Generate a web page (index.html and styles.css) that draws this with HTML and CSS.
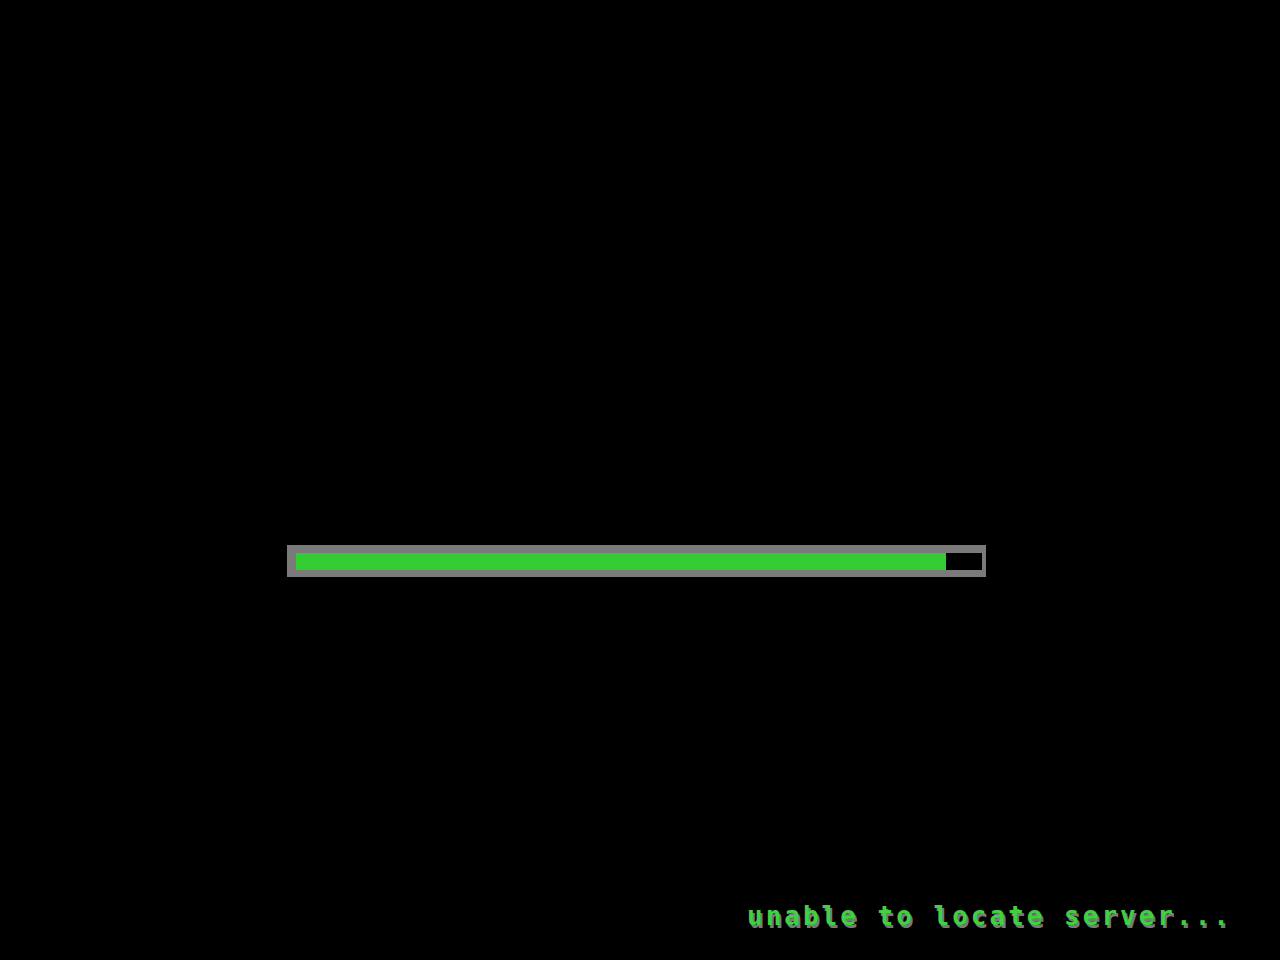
FILE: index.html
```html
<!DOCTYPE html>
<html>
<head>
<meta charset="utf-8">
<link rel="stylesheet" href="styles.css">
<title>Loading</title>
</head>
<body>
<div class="screen">
  <div class="bar-row">
    <div class="bar">
      <div class="track"><div class="fill" style="width:94.75%"></div></div>
    </div>
  </div>
  <div class="status-row">
    <span class="status">unable to locate server...</span>
  </div>
</div>
</body>
</html>
```
FILE: styles.css
```css
html, body {
  margin: 0;
  padding: 0;
  background: #000;
}
.screen {
  width: 1280px;
  height: 960px;
  display: flex;
  flex-direction: column;
  box-sizing: border-box;
}
.bar-row {
  padding-top: 545px;
  padding-left: 287px;
}
.bar {
  width: 699px;
  height: 32px;
  box-sizing: border-box;
  background: #7a7a7a;
  padding: 8px 4px 7px 9px;
}
.track {
  height: 17px;
  background: #000;
  display: flex;
}
.fill {
  height: 100%;
  background: #33cc33;
}
.status-row {
  margin-top: auto;
  display: flex;
  justify-content: flex-end;
  padding-right: 48px;
  padding-bottom: 29px;
}
.status {
  font-family: "DejaVu Sans Mono", "Liberation Mono", monospace;
  font-weight: bold;
  font-size: 26px;
  letter-spacing: 3px;
  line-height: 30px;
  color: #40d040;
  text-shadow: 2px 3px 0 #7a7a7a;
}
```
